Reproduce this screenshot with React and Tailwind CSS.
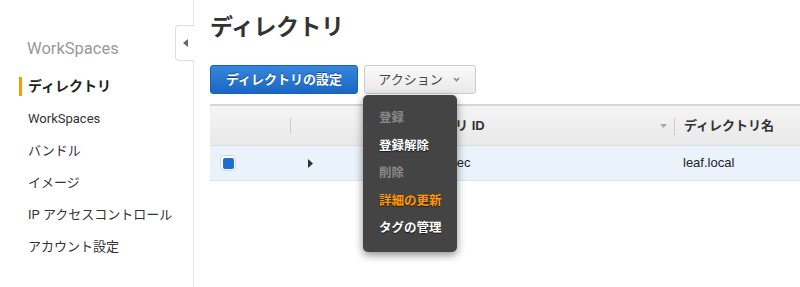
import React from 'react';

const navItems = [
  { label: 'ディレクトリ', active: true },
  { label: 'WorkSpaces' },
  { label: 'バンドル' },
  { label: 'イメージ' },
  { label: 'IP アクセスコントロール' },
  { label: 'アカウント設定' },
];

const menuItems = [
  { label: '登録', tone: 'disabled' },
  { label: '登録解除', tone: 'normal' },
  { label: '削除', tone: 'disabled' },
  { label: '詳細の更新', tone: 'hover' },
  { label: 'タグの管理', tone: 'normal' },
];

const font = { fontFamily: 'Roboto, "Noto Sans CJK JP", sans-serif' };

const Sidebar = () => (
  <aside className="relative w-[194px] shrink-0 border-r border-[#e6e6e6] h-[287px]">
    <div className="pl-[27px] pt-[37px] text-[16.5px] leading-[24px] text-[#999]">WorkSpaces</div>
    <nav className="mt-[9px]">
      {navItems.map((item) => (
        <div key={item.label} className="relative h-[32.2px] flex items-center pl-[28px]">
          {item.active && <span className="absolute left-[19px] top-[7px] w-[3px] h-[19px] bg-[#f90]" />}
          <span
            className={
              item.active
                ? 'text-[14px] font-bold text-[#222]'
                : 'text-[13px] text-[#333]'
            }
          >
            {item.label}
          </span>
        </div>
      ))}
    </nav>
    {/* collapse tab */}
    <div className="absolute right-[-1px] top-[25px] w-[19px] h-[36px] bg-white border border-r-0 border-[#ddd] rounded-l-[4px] flex items-center justify-center">
      <svg width="5" height="8" viewBox="0 0 5 8">
        <path d="M5 0 L0 4 L5 8 Z" fill="#666" />
      </svg>
    </div>
  </aside>
);

const ActionMenu = () => (
  <div className="absolute left-[169px] top-[95px] w-[94px] h-[157px] bg-[#444] rounded-[5px] shadow-[0_3px_8px_rgba(0,0,0,0.45)] pt-[10px] pl-[16px]">
    {menuItems.map((m) => (
      <div
        key={m.label}
        className={
          'h-[27.5px] flex items-center text-[12.5px] font-bold ' +
          (m.tone === 'disabled'
            ? 'text-[#888]'
            : m.tone === 'hover'
            ? 'text-[#f90] [text-shadow:0_1px_1px_rgba(0,0,0,0.6)]'
            : 'text-white [text-shadow:0_1px_1px_rgba(0,0,0,0.7)]')
        }
      >
        {m.label}
      </div>
    ))}
  </div>
);

export default function App() {
  return (
    <div className="flex w-[800px] h-[287px] bg-white overflow-hidden" style={font}>
      <Sidebar />
      <main className="relative flex-1 pl-[16px] pt-[13px]">
        <h1 className="text-[23px] leading-[30px] font-bold text-[#333] tracking-[-0.5px]">ディレクトリ</h1>
        <div className="mt-[22px] flex gap-[6px]">
          <button className="h-[29px] w-[148px] rounded-[3px] border border-[#1b5fb0] bg-gradient-to-b from-[#3587dc] to-[#1b67c4] text-white text-[13px] font-bold [text-shadow:0_-1px_0_rgba(0,0,0,0.45)]">
            ディレクトリの設定
          </button>
          <button className="h-[29px] w-[112px] rounded-[3px] border border-[#ccc] bg-gradient-to-b from-[#fafafa] to-[#e9e9e9] text-[#444] text-[13px] flex items-center justify-center gap-[10px] pr-[2px]">
            <span>アクション</span>
            <svg width="7" height="5" viewBox="0 0 7 5">
              <path d="M1 1 L3.5 3.5 L6 1" stroke="#888" strokeWidth="1.6" fill="none" />
            </svg>
          </button>
        </div>

        <div className="mt-[10px] border-t-2 border-[#d5d5d5]" style={{ fontFamily: '"Liberation Sans", Arial, "Noto Sans CJK JP", sans-serif' }}>
          <div className="flex h-[40px] items-center bg-gradient-to-b from-[#f4f4f4] to-[#e9e9e9] border-b border-[#ddd] text-[13px] font-bold text-[#333]">
            <div className="w-[81px] h-full flex items-center justify-end">
              <span className="w-px h-[15px] bg-[#ccc]" />
            </div>
            <div className="w-[384px] h-full flex items-center pl-[100px] relative">
              <span>ディレクトリ ID</span>
              <svg className="absolute right-[8px] top-[18px]" width="7" height="4" viewBox="0 0 7 4">
                <path d="M0 0 L7 0 L3.5 4 Z" fill="#aaa" />
              </svg>
              <span className="absolute right-0 top-[12px] w-px h-[17px] bg-[#ccc]" />
            </div>
            <div className="pl-[9px]">ディレクトリ名</div>
          </div>
          <div className="flex h-[35px] items-center bg-[#eaf2fc] border-b border-[#dde3ea] text-[13px] text-[#222]">
            <div className="w-[81px] pl-[10px]">
              <div className="w-[16px] h-[16px] rounded-[4px] border border-[#cfd6de] bg-white flex items-center justify-center">
                <div className="w-[11px] h-[11px] rounded-[2px] bg-[#1d6ed3]" />
              </div>
            </div>
            <div className="w-[384px] flex items-center">
              <svg className="ml-[17px]" width="5" height="9" viewBox="0 0 5 9">
                <path d="M0 0 L5 4.5 L0 9 Z" fill="#333" />
              </svg>
              <span className="ml-[78px]">d-90676f89ec</span>
            </div>
            <div className="pl-[8px]">leaf.local</div>
          </div>
        </div>

        <ActionMenu />
      </main>
    </div>
  );
}
